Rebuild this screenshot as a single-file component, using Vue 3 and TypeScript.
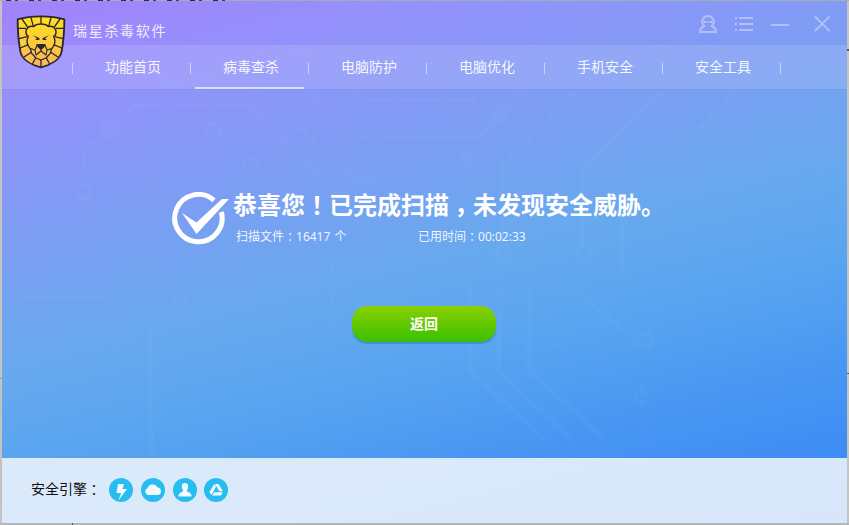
<script setup lang="ts">
const tabs: string[] = ['功能首页', '病毒查杀', '电脑防护', '电脑优化', '手机安全', '安全工具']
const active = '病毒查杀'
</script>

<template>
  <div class="desktop">
    <main class="window">
      <svg class="circuit" viewBox="0 0 845 457" fill="none" stroke="#a0d8ff" aria-hidden="true">
        <g stroke-width="5" opacity=".055">
          <path d="M81 184V151L132 105H250L342 197M258 88L340 168L355 180H405M305 88L356 136H476L520 90M350 88L362 99H474" />
          <path d="M20 296H113L149 331V457M660 90L580 168V245M575 90L500 165V240M735 90L620 205V275M568 285L640 345" />
          <path d="M468 285V370L545 440M497 285V370L570 440M527 285V370L600 435" />
          <circle cx="81" cy="190" r="7" /><circle cx="249" cy="164" r="7" /><circle cx="212" cy="130" r="7" />
          <circle cx="107" cy="128" r="7" /><circle cx="179" cy="300" r="6" /><circle cx="498" cy="113" r="7" />
          <circle cx="464" cy="160" r="6" /><circle cx="501" cy="253" r="7" /><circle cx="582" cy="253" r="7" />
          <circle cx="643" cy="339" r="7" /><circle cx="639" cy="396" r="6" />
        </g>
        <g stroke-width="1.5" opacity=".055">
          <path d="M119 275V155L141 130V90M131 270V158L141 141L151 158V270M141 141V276M79 236H117M79 250H117M119 275L139 296" />
          <path d="M144 118H247L320 190M390 160H440L456 177H485M222 296V210L260 170M330 278V262L347 250M330 330V280" />
          <path d="M700 120V180M765 100V176M820 90V180M735 140V210M558 285L630 350M558 320L610 370M640 380V435M880 330V390" />
          <circle cx="195" cy="158" r="6" /><circle cx="174" cy="128" r="6" /><circle cx="142" cy="134" r="7" />
          <circle cx="388" cy="160" r="6" /><circle cx="380" cy="253" r="6" /><circle cx="328" cy="332" r="6" />
          <circle cx="555" cy="350" r="7" /><circle cx="445" cy="417" r="6" /><circle cx="105" cy="349" r="7" />
        </g>
      </svg>

      <header class="titlebar">
        <svg class="crest" viewBox="0 0 186 198" aria-hidden="true">
          <defs>
            <linearGradient id="gold" x1="0" y1="0" x2="0" y2="1">
              <stop offset="0" stop-color="#ffe01c" />
              <stop offset="1" stop-color="#fcb658" />
            </linearGradient>
          </defs>
          <path d="M23 34C46 27 70 25 93 25S140 27 163 34C163 66 161 98 155 130C150 155 122 171 93 178C64 171 36 155 31 130C25 98 23 66 23 34Z" fill="url(#gold)" stroke="#292633" stroke-width="5.5" />
          <g fill="none" stroke="#292633" stroke-width="4" stroke-linejoin="round">
            <path d="M93 48C83 48 75 51 70 56C61 52 49 59 48 70C47 78 51 83 55 85C49 98 51 112 61 122L65 136L78 150L93 156L108 150L121 136L125 122C135 112 137 98 131 85C135 83 139 78 138 70C137 59 125 52 116 56C111 51 103 48 93 48Z" />
            <path d="M93 26V48M63 29L70 55M123 29L116 55M36 33L54 59M150 33L132 59M25 61H48M161 61H138M27 92L52 86M159 92L134 86M31 120L55 110M155 120L131 110M42 147L65 132M144 147L121 132M67 168L77 150M119 168L109 150M93 156V178" />
            <path d="M81 112L75 126L61 122M105 112L111 126L125 122M93 122V129L78 141L75 126M93 129L108 141L111 126" stroke-width="3.4" />
          </g>
          <path d="M68 82L88 90V96H77V93L82 92ZM118 82L98 90V96H109V93L104 92ZM79 108H107L103 118L93 126L83 118Z" fill="#292633" />
        </svg>
        <h1 class="product">瑞星杀毒软件</h1>
        <div class="controls">
          <svg viewBox="0 0 18 18" aria-hidden="true">
            <path d="M5.3 11C2.8 9 2.7 5.6 4 3.8C5.3 1.8 7 1 9 1S12.7 1.8 14 3.8C15.3 5.6 15.2 9 12.7 11C15.5 12.2 17 13.8 17 17H1C1 13.8 2.5 12.2 5.3 11Z" />
            <path d="M5 7H13" stroke-width="1" /><path d="M4.5 7H6.5M11.5 7H13.5" />
          </svg>
          <svg viewBox="0 0 18 18" aria-hidden="true"><path d="M0 3H2M4 3H18M0 9H2M4 9H18M0 15H2M4 15H18" /></svg>
          <svg viewBox="0 0 18 18" aria-hidden="true"><path d="M0 10H18" /></svg>
          <svg class="close" viewBox="0 0 18 18" aria-hidden="true"><path d="M2 1.5L16.5 16M16.5 1.5L2 16" stroke-width="1.8" /></svg>
        </div>
      </header>

      <nav class="tabs">
        <div v-for="tab in tabs" :key="tab" class="tab" :class="{ active: tab === active }"><span>{{ tab }}</span></div>
      </nav>

      <section class="result">
        <svg class="check" viewBox="0 0 58 54" aria-hidden="true">
          <path d="M42 8.3A23.7 23.7 0 1 0 49.3 20" fill="none" stroke="#fff" stroke-width="5" />
          <path d="M10 21L24.5 30.5L50 7H57L24.5 42Z" fill="#fff" />
        </svg>
        <div>
          <h2>恭喜您<span class="mid">！</span>已完成扫描<span class="mid comma">，</span>未发现安全威胁。</h2>
          <div class="stats">
            <span class="files">扫描文件<span class="mid colon">：</span>16417 个</span>
            <span>已用时间<span class="mid colon">：</span>00:02:33</span>
          </div>
        </div>
      </section>

      <button class="back" type="button">返回</button>

      <footer class="engines">
        <span class="label">安全引擎<span class="mid colon">：</span></span>
        <div class="badges">
          <svg viewBox="0 0 24 24" aria-hidden="true">
            <circle cx="12" cy="12" r="12" fill="#28bdf0" />
            <path d="M9 6H15L13.5 11H18L9.5 22.5L12 15H7.5Z" fill="#f4fbff" />
          </svg>
          <svg viewBox="0 0 24 24" aria-hidden="true">
            <circle cx="12" cy="12" r="12" fill="#28bdf0" />
            <path d="M7 17A3.5 3.5 0 0 1 6.5 10.3A5.4 5.4 0 0 1 16.5 9.5A3.8 3.8 0 0 1 17 17Z" fill="#f4fbff" />
          </svg>
          <svg viewBox="0 0 24 24" aria-hidden="true">
            <circle cx="12" cy="12" r="12" fill="#28bdf0" />
            <path d="M12 5C9.8 5 8.7 6.4 8.8 8.5C8.9 10.5 9.8 11.8 10.2 12.7C9.8 14.2 5.3 14.2 5.3 18.5H18.7C18.7 14.2 14.2 14.2 13.8 12.7C14.2 11.8 15.1 10.5 15.2 8.5C15.3 6.4 14.2 5 12 5Z" fill="#f4fbff" />
          </svg>
          <svg viewBox="0 0 24 24" aria-hidden="true">
            <circle cx="12" cy="12" r="12" fill="#28bdf0" />
            <path d="M10.3 6L12 8.9L7.3 17L5.4 13.9ZM11 6H14.5L18.9 13.3H15.3ZM10 14.3H18.8L17 17.5H8.2Z" fill="#f4fbff" />
          </svg>
        </div>
      </footer>
    </main>
  </div>
</template>

<style>
body {
  margin: 0;
  overflow: hidden;
}
</style>

<style scoped>
.desktop {
  box-sizing: border-box;
  width: 849px;
  height: 525px;
  padding: 1px 2px 2px;
  background:
    repeating-linear-gradient(90deg, #2a2e38 0 5px, transparent 5px 9px, #3a4048 9px 12px, transparent 12px 23px) 6px 0 / 219px 1px no-repeat,
    linear-gradient(#555, #555) 847px 49px / 2px 2px no-repeat,
    linear-gradient(#555, #555) 847px 373px / 2px 1px no-repeat,
    linear-gradient(#999, #999) 0 378px / 2px 1px no-repeat,
    linear-gradient(#555, #555) 72px 523px / 1px 2px no-repeat,
    linear-gradient(#9cb0b5 0 1px, #c3c3c1 1px 523px, #b4b6ba 523px);
  font-family: "Noto Sans", "Noto Sans CJK SC", sans-serif;
  color: #fff;
}
.window {
  position: relative;
  display: flex;
  flex-direction: column;
  height: 522px;
  background: linear-gradient(166deg, #a481fb 0, #9590fc 15%, #8599f6 29%, #68a9ee 55%, #5aa5f0 69%, #4a98f2 84%, #3d8bf5 100%) 0 0 / 845px 457px no-repeat;
}
.circuit {
  position: absolute;
  inset: 0 auto auto 0;
  width: 845px;
  height: 457px;
}
.titlebar {
  position: relative;
  z-index: 1;
  display: flex;
  height: 44px;
}
.crest {
  width: 62px;
  height: 66px;
  margin: 7px 0 0 8px;
  flex: none;
}
.product {
  margin: 20px 0 0 1px;
  font-size: 14px;
  line-height: 20px;
  font-weight: 400;
  letter-spacing: 1.7px;
  color: #f1eaff;
}
.controls {
  display: flex;
  gap: 18px;
  margin: 14px 16px 0 auto;
}
.controls svg {
  width: 18px;
  height: 18px;
  fill: none;
  stroke: rgba(255, 255, 255, .38);
  stroke-width: 2;
}
.controls .close {
  margin-left: 6px;
}
.tabs {
  position: relative;
  display: flex;
  box-sizing: border-box;
  height: 45px;
  padding-left: 70px;
  background: rgba(255, 255, 255, .13);
  border-bottom: 1px solid rgba(60, 90, 190, .22);
}
.tab {
  display: flex;
  width: 118px;
  background: linear-gradient(rgba(255, 255, 255, .5), rgba(255, 255, 255, .5)) 0 18px / 1px 11px no-repeat;
}
.tab:last-child {
  width: 119px;
  background: linear-gradient(rgba(255, 255, 255, .5), rgba(255, 255, 255, .5)) 0 18px / 1px 11px no-repeat,
    linear-gradient(rgba(255, 255, 255, .5), rgba(255, 255, 255, .5)) 118px 18px / 1px 11px no-repeat;
}
.tab span {
  box-sizing: border-box;
  width: 109px;
  margin-left: 5px;
  padding-left: 28px;
  font-size: 14px;
  line-height: 44px;
  color: rgba(255, 255, 255, .93);
}
.active span {
  border-bottom: 2px solid rgba(255, 255, 255, .65);
}
.result {
  position: relative;
  display: flex;
  height: 60px;
  margin: 97px 0 0 170px;
}
.check {
  width: 58px;
  height: 54px;
  margin: 5px 3px 0 0;
}
h2 {
  height: 36px;
  margin: 0;
  font-size: 24px;
  line-height: 36px;
  font-weight: 700;
  white-space: nowrap;
}
.mid {
  font-family: "Noto Sans CJK TC", sans-serif;
  line-height: 0;
}
.comma {
  position: relative;
  top: 7px;
}
.colon {
  position: relative;
  top: 1px;
}
.stats {
  display: flex;
  height: 20px;
  margin: 4px 0 0 2px;
  font-size: 12px;
  line-height: 20px;
  color: rgba(255, 255, 255, .92);
}
.files {
  width: 182px;
  padding-left: 1px;
  word-spacing: 1px;
}
.back {
  position: relative;
  width: 144px;
  height: 36px;
  margin: 59px 0 0 350px;
  padding: 0;
  border: 0;
  border-radius: 15px;
  background: linear-gradient(#8bd000, #38c000);
  box-shadow: 0 2px 1px rgba(50, 110, 190, .5);
  color: #fff;
  font: 700 14px/36px "Noto Sans", "Noto Sans CJK SC", sans-serif;
}
.engines {
  display: flex;
  align-items: center;
  box-sizing: border-box;
  height: 65px;
  margin-top: auto;
  padding: 0 0 2px 29px;
  background: linear-gradient(166deg, #dcebfb, #d8e6fb);
  color: #111;
  font-size: 14px;
  line-height: 20px;
}
.label {
  padding-bottom: 2px;
}
.badges {
  display: flex;
  gap: 8px;
  margin-left: 8px;
}
.badges svg {
  width: 24px;
  height: 24px;
}
.badges svg:last-child {
  margin-left: -1px;
}
</style>
